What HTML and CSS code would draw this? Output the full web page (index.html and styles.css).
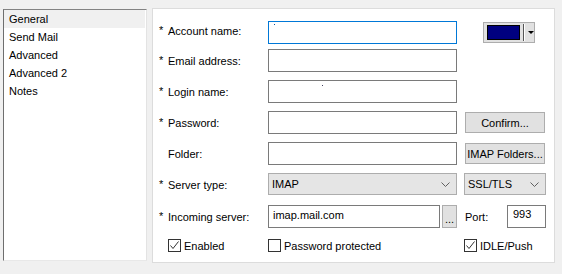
FILE: index.html
```html
<!DOCTYPE html>
<html>
<head>
<meta charset="utf-8">
<link rel="stylesheet" href="styles.css">
</head>
<body>
<div class="window">
  <ul class="nav">
    <li class="sel">General</li>
    <li>Send Mail</li>
    <li>Advanced</li>
    <li>Advanced 2</li>
    <li>Notes</li>
  </ul>
  <div class="panel">
    <div class="form">
      <label class="lbl up"><span class="req">*</span>Account name:</label>
      <div class="input focus"><span class="dot dot-acc"></span></div>
      <div class="rcell">
        <div class="colorpick">
          <span class="swatch"></span>
          <span class="sep"></span>
          <span class="tri"></span>
        </div>
      </div>

      <label class="lbl"><span class="req">*</span>Email address:</label>
      <div class="input"></div>
      <div></div>

      <label class="lbl"><span class="req">*</span>Login name:</label>
      <div class="input"><span class="dot dot-login"></span></div>
      <div></div>

      <label class="lbl"><span class="req">*</span>Password:</label>
      <div class="input"></div>
      <div class="rcell"><button class="btn">Confirm...</button></div>

      <label class="lbl"><span class="req"></span>Folder:</label>
      <div class="input"></div>
      <div class="rcell"><button class="btn">IMAP Folders...</button></div>

      <label class="lbl"><span class="req">*</span>Server type:</label>
      <div class="select">IMAP<svg class="chev" width="9" height="5" viewBox="0 0 9 5"><path d="M0.5 0.5 L4.5 4.5 L8.5 0.5" fill="none" stroke="#606060" stroke-width="1"/></svg></div>
      <div class="select ssl">SSL/TLS<svg class="chev" width="9" height="5" viewBox="0 0 9 5"><path d="M0.5 0.5 L4.5 4.5 L8.5 0.5" fill="none" stroke="#606060" stroke-width="1"/></svg></div>

      <label class="lbl"><span class="req">*</span>Incoming server:</label>
      <div class="incoming">
        <div class="input val">imap.mail.com</div>
        <button class="dots">...</button>
      </div>
      <div class="portcell">
        <span class="portlbl">Port:</span>
        <div class="input port">993</div>
      </div>

      <label class="check first"><span class="box on"><svg width="11" height="11" viewBox="0 0 11 11"><path d="M1.5 5.5 L4 8.5 L9.5 1.5" fill="none" stroke="#333" stroke-width="1"/></svg></span>Enabled</label>
      <label class="check"><span class="box"></span>Password protected</label>
      <label class="check"><span class="box on"><svg width="11" height="11" viewBox="0 0 11 11"><path d="M1.5 5.5 L4 8.5 L9.5 1.5" fill="none" stroke="#333" stroke-width="1"/></svg></span>IDLE/Push</label>
    </div>
  </div>
</div>
</body>
</html>
```
FILE: styles.css
```css
* { box-sizing: border-box; }
html, body { margin: 0; padding: 0; }
body {
  background: #f0f0f0;
  font-family: "Liberation Sans", Arial, sans-serif;
  font-size: 11px;
  color: #000;
  width: 562px;
  height: 274px;
  overflow: hidden;
}
.window {
  display: flex;
  align-items: flex-start;
  gap: 5px;
  padding: 8px 0 0 3px;
}
.nav {
  list-style: none;
  margin: 1px 0 0 0;
  padding: 0;
  width: 144px;
  height: 252px;
  background: #fff;
  border-top: 1px solid #828282;
  border-left: 1px solid #6e6e6e;
  border-right: 1px solid #e3e3e3;
  border-bottom: 1px solid #e8e8e8;
}
.nav li {
  height: 18px;
  line-height: 18px;
  padding-left: 5px;
}
.nav li.sel { background: #f0f0f0; margin-right: 1px; }
.panel {
  width: 403px;
  height: 255px;
  background: #fff;
  border: 1px solid #dcdcdc;
  padding: 12px 0 0 6px;
}
.form {
  display: grid;
  grid-template-columns: 102px 189px 82px;
  grid-template-rows: 28px 31px 31px 31px 31px 32px 34px 14px;
  column-gap: 7px;
}
.lbl {
  display: flex;
  align-items: center;
  height: 23px;
  white-space: nowrap;
}
.lbl.up { height: 19px; }
.req {
  display: inline-block;
  width: 9px;
  line-height: 1;
}
.input {
  position: relative;
  height: 23px;
  border: 1px solid #7a7a7a;
  background: #fff;
}
.input.focus { border-color: #0078d7; }
.dot {
  position: absolute;
  width: 1px;
  height: 1px;
}
.dot-acc { left: 5px; top: 2px; background: #0050a0; }
.dot-login { left: 53px; top: 4px; background: #404060; }
.input.val {
  padding-left: 4px;
  line-height: 19px;
}
.rcell { display: flex; align-items: flex-start; }
.colorpick {
  margin: 1px 0 0 19px;
  width: 52px;
  height: 21px;
  background: #e1e1e1;
  border: 1px solid #adadad;
  display: flex;
  align-items: center;
  padding-left: 3px;
}
.swatch {
  width: 35px;
  height: 15px;
  background: #000080;
  border: 1px solid #000;
}
.sep {
  width: 2px;
  height: 17px;
  margin-left: 3px;
  border-left: 1px solid #555;
  border-right: 1px solid #fff;
}
.tri {
  margin-left: 3px;
  width: 0;
  height: 0;
  border-left: 3px solid transparent;
  border-right: 3px solid transparent;
  border-top: 3px solid #000;
}
.btn {
  margin: 1px 0 0 1px;
  width: 80px;
  height: 21px;
  background: #e1e1e1;
  border: 1px solid #adadad;
  font: inherit;
  color: #000;
  padding: 0;
  white-space: nowrap;
}
.select {
  height: 22px;
  background: #e5e5e5;
  border: 1px solid #adadad;
  display: flex;
  align-items: center;
  justify-content: space-between;
  padding: 0 6px 0 3px;
  white-space: nowrap;
}
.chev { display: block; flex: none; }
.incoming { display: flex; gap: 2px; }
.incoming .input { width: 172px; }
.dots {
  width: 15px;
  height: 23px;
  background: #e1e1e1;
  border: 1px solid #adadad;
  font: inherit;
  padding: 0;
  color: #000;
  line-height: 1;
  padding-top: 6px;
}
.portcell {
  display: flex;
  align-items: center;
  height: 23px;
  padding-left: 1px;
}
.portlbl { width: 42px; }
.input.port {
  width: 39px;
  padding: 0 0 0 5px;
  line-height: 17px;
}
.check {
  display: flex;
  align-items: center;
  height: 13px;
  white-space: nowrap;
}
.check.first { padding-left: 9px; }
.box {
  width: 13px;
  height: 13px;
  border: 1px solid #333;
  background: #fff;
  margin-right: 3px;
  display: flex;
  align-items: center;
  justify-content: center;
  flex: none;
}
.box svg { display: block; }
```
